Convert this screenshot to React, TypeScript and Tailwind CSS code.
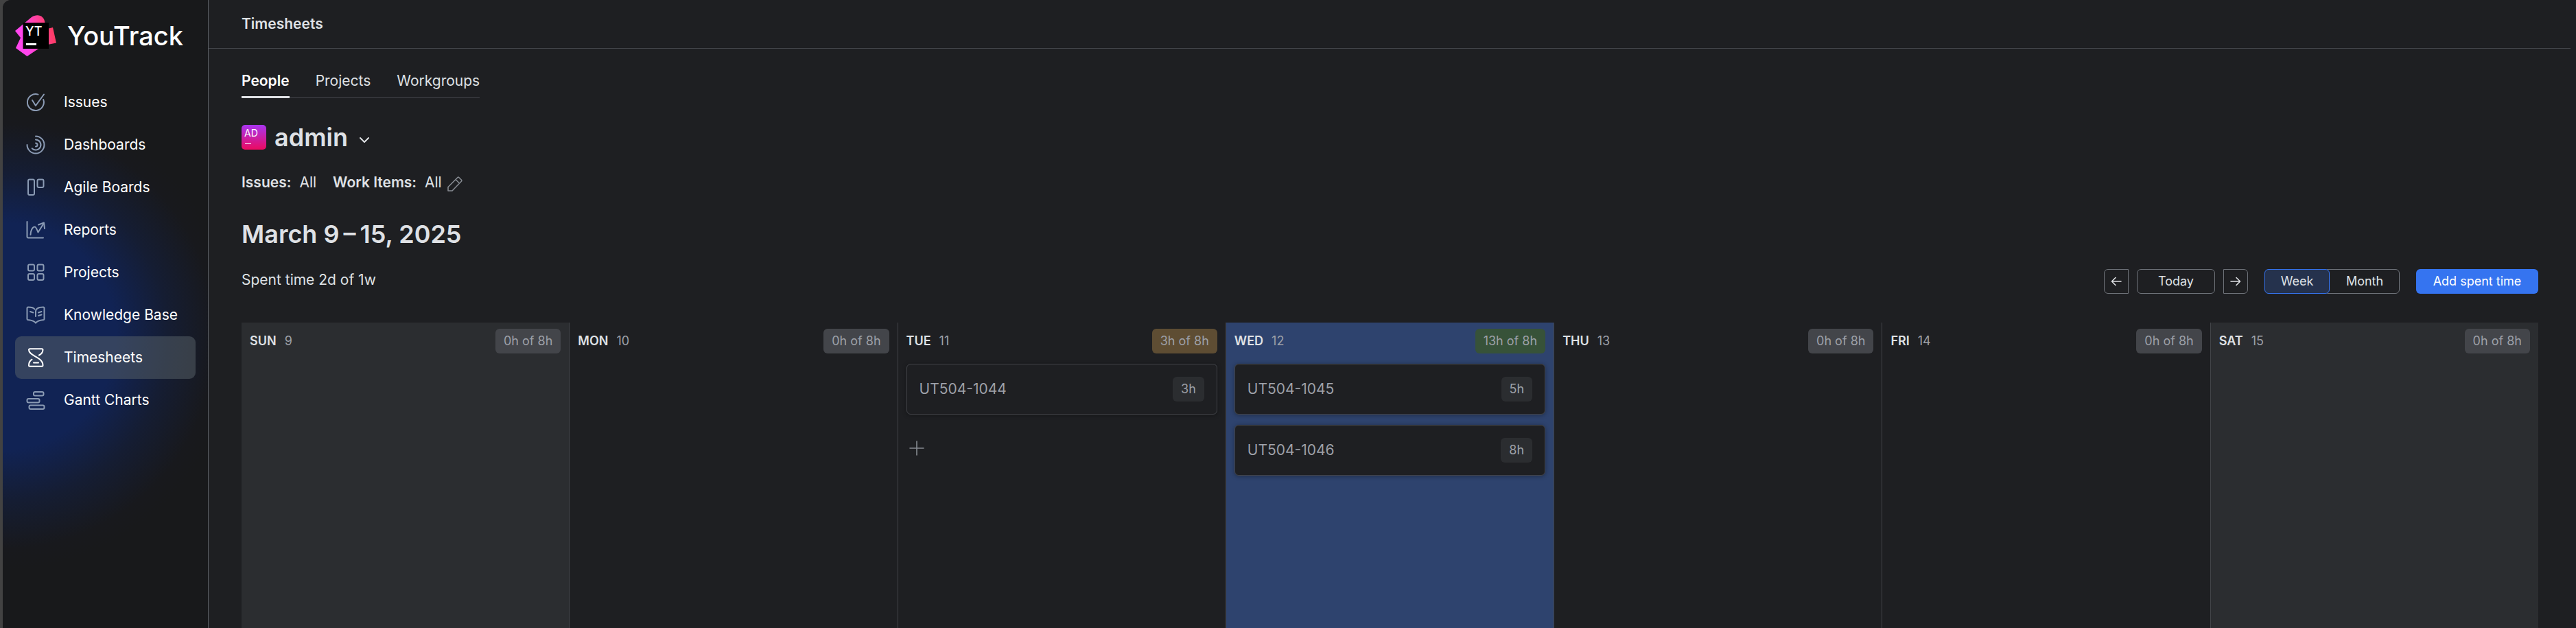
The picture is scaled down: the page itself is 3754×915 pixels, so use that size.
import { type ReactNode } from "react";

const svgProps = {
  width: 30,
  height: 30,
  viewBox: "0 0 30 30",
  fill: "none",
  stroke: "currentColor",
  strokeWidth: 2,
  strokeLinecap: "round" as const,
  strokeLinejoin: "round" as const,
  "aria-hidden": true,
};

const Icon = ({ children }: { children: ReactNode }) => <svg {...svgProps}>{children}</svg>;

const NAV: { label: string; icon: ReactNode; active?: boolean }[] = [
  {
    label: "Issues",
    icon: (
      <Icon>
        <path d="M18.5 3.6A12 12 0 1 0 26.2 11" />
        <path d="M10 12l5 8L27 3.5" />
      </Icon>
    ),
  },
  {
    label: "Dashboards",
    icon: (
      <Icon>
        <path d="M15 2.5a12.5 12.5 0 1 1-12.5 12.5" />
        <path d="M15 7.5a7.5 7.5 0 1 1-5.3 12.8" />
        <path d="M15 12.5a2.5 2.5 0 0 1 0 5" />
      </Icon>
    ),
  },
  {
    label: "Agile Boards",
    icon: (
      <Icon>
        <rect x="4" y="3.5" width="9" height="22.5" rx="2" />
        <rect x="17.5" y="3.5" width="9" height="11.5" rx="2" />
      </Icon>
    ),
  },
  {
    label: "Reports",
    icon: (
      <Icon>
        <path d="M2.5 3v22a1.5 1.5 0 0 0 1.5 1.5h22" />
        <path d="M7.5 22c0-6 3-11.5 6-11.5 2.5 0 3.5 5 5 8L27 5" />
        <path d="M19 7.5L27 4.5l1 8.5" />
      </Icon>
    ),
  },
  {
    label: "Projects",
    icon: (
      <Icon>
        <rect x="4" y="3.5" width="9" height="9" rx="2" />
        <rect x="17.5" y="3.5" width="9" height="9" rx="2" />
        <rect x="4" y="17" width="9" height="9" rx="2" />
        <rect x="17.5" y="17" width="9" height="9" rx="2" />
      </Icon>
    ),
  },
  {
    label: "Knowledge Base",
    icon: (
      <Icon>
        <path d="M15 26.5C13 23.5 8 22.5 3.5 22a1.2 1.2 0 0 1-1-1.2V5A1.5 1.5 0 0 1 4 3.5c4 0 8 .5 9.5 3" />
        <path d="M15 26.5c2-3 7-4 11.5-4.5a1.2 1.2 0 0 0 1-1.2V5A1.5 1.5 0 0 0 26 3.5C20 3.500 15 5 15 10v7" />
        <path d="M7 10l4.5 1.5M19 11.5l4.5-1.5M19 16l4.5-1.5" />
      </Icon>
    ),
  },
  {
    label: "Timesheets",
    active: true,
    icon: (
      <Icon>
        <path d="M20 11.5c4-2 5.5-4 5.5-8A1.5 1.5 0 0 0 24 2.3H6.5A1.5 1.5 0 0 0 5 3.800C5 13 25.5 13.5 25.5 26.2a1.5 1.5 0 0 1-1.5 1.5H6.5A1.5 1.5 0 0 1 5 26.2c0-4 1.5-6.5 4.5-8.5" />
        <path d="M12 22.5h7" />
      </Icon>
    ),
  },
  {
    label: "Gantt Charts",
    icon: (
      <Icon>
        <rect x="12" y="3" width="14.5" height="5.5" rx="2" />
        <rect x="2.5" y="13" width="18" height="5.5" rx="2" />
        <rect x="5.5" y="22.5" width="22" height="5.5" rx="2" />
      </Icon>
    ),
  },
];

type Day = {
  name: string;
  date: number;
  spent: string;
  column?: string;
  badge?: string;
  items?: { id: string; time: string }[];
  canAdd?: boolean;
};

const DAYS: Day[] = [
  { name: "SUN", date: 9, spent: "0h of 8h", column: "bg-[#2b2d30]" },
  { name: "MON", date: 10, spent: "0h of 8h" },
  {
    name: "TUE",
    date: 11,
    spent: "3h of 8h",
    badge: "bg-[#5e4d33]",
    items: [{ id: "UT504-1044", time: "3h" }],
    canAdd: true,
  },
  {
    name: "WED",
    date: 12,
    spent: "13h of 8h",
    column: "bg-[#2e436e]",
    badge: "bg-[#375239]",
    items: [
      { id: "UT504-1045", time: "5h" },
      { id: "UT504-1046", time: "8h" },
    ],
  },
  { name: "THU", date: 13, spent: "0h of 8h" },
  { name: "FRI", date: 14, spent: "0h of 8h" },
  { name: "SAT", date: 15, spent: "0h of 8h", column: "bg-[#2b2d30]" },
];

function Logo() {
  return (
    <a href="#home" className="flex items-center gap-4 pl-[18px] text-white">
      <svg width="60" height="60" viewBox="0 0 60 60" aria-hidden="true">
        <defs>
          <linearGradient id="mark" gradientUnits="userSpaceOnUse" x1="0" y1="40" x2="60" y2="24">
            <stop offset="0.25" stopColor="#ff45ed" />
            <stop offset="0.7" stopColor="#fe4090" />
            <stop offset="0.9" stopColor="#ff3c69" />
          </linearGradient>
        </defs>
        <path
          d="M0 23L24 3C32-2.500 43 0 43.500 12V40L34 49L17.500 60L1 48L8 33ZM45 20.500L55 18L60 40.500L45 43.500Z"
          fill="url(#mark)"
        />
        <rect x="11.500" y="11" width="37.500" height="38" fill="#000" />
        <text x="15" y="30" fontSize="18" fontFamily="Inter, sans-serif" fontWeight="500" fill="#fff">
          YT
        </text>
        <rect x="16" y="41" width="15" height="3" fill="#fff" />
      </svg>
      <span className="text-[38px] leading-[48px] font-medium">YouTrack</span>
    </a>
  );
}

function Sidebar() {
  return (
    <aside className="flex w-[300px] shrink-0 flex-col rounded-tl-xl border-r border-[#5a5d63] bg-[#18191b] bg-[radial-gradient(circle_at_0px_490px,#112354_0px,#112354_165px,#151d33_240px,#18191d_310px,#18191b_340px)] pt-[22px]">
      <Logo />
      <nav className="mt-[36px] flex flex-col px-[18px]">
        {NAV.map((item) => (
          <a
            key={item.label}
            href={"#" + item.label}
            className={
              "flex h-[62px] items-center gap-[26px] rounded-[9px] pl-[15px] text-[21px] leading-[30px] text-white " +
              (item.active ? "bg-[#5a6469]/50" : "")
            }
          >
            <span className={item.active ? "text-white" : "text-[#8b9bb4]"}>{item.icon}</span>
            {item.label}
          </a>
        ))}
      </nav>
    </aside>
  );
}

function Tabs() {
  return (
    <div role="tablist" className="flex w-fit gap-[38px] border-b border-[#43454a] text-[21px] leading-[30px]">
      <button role="tab" aria-selected="true" className="-mb-px border-b-3 border-[#dfe1e5] pb-[7px] font-semibold text-white">
        People
      </button>
      <button role="tab" aria-selected="false" className="pb-[9px]">
        Projects
      </button>
      <button role="tab" aria-selected="false" className="pb-[9px]">
        Workgroups
      </button>
    </div>
  );
}

function Controls() {
  return (
    <div className="flex text-[18px] leading-[24px]">
      <button aria-label="Previous" className="flex h-9 w-9 items-center justify-center rounded-l-md border border-[#6f737a]">
        <svg width="18" height="18" viewBox="0 0 18 18" fill="none" stroke="currentColor" strokeWidth="1.6" strokeLinecap="round" strokeLinejoin="round">
          <path d="M16 9H2.5M8 3.5L2.5 9L8 14.5" />
        </svg>
      </button>
      <button className="ml-3 h-9 w-[114px] rounded-md border border-[#6f737a]">Today</button>
      <button aria-label="Next" className="ml-3 flex h-9 w-9 items-center justify-center rounded-r-md border border-[#6f737a]">
        <svg width="18" height="18" viewBox="0 0 18 18" fill="none" stroke="currentColor" strokeWidth="1.6" strokeLinecap="round" strokeLinejoin="round">
          <path d="M2 9H15.5M10 3.5L15.5 9L10 14.5" />
        </svg>
      </button>
      <button className="z-10 ml-6 h-9 w-[95px] rounded-md border border-[#3574f0] bg-[#25324d]">Week</button>
      <button className="-ml-1 h-9 w-[106px] rounded-r-md border border-[#6f737a] pl-1">Month</button>
      <button className="ml-6 h-9 w-[178px] rounded-md bg-[#3574f0] text-white">Add spent time</button>
    </div>
  );
}

function DayColumn({ day, last }: { day: Day; last: boolean }) {
  return (
    <section
      className={
        "flex min-w-0 flex-1 flex-col px-3 pt-[9px] " + (day.column ?? "") + (last ? "" : " border-r border-[#43454a]")
      }
    >
      <header className="flex items-center text-[18px] leading-[36px]">
        <h2 className="font-semibold">{day.name}</h2>
        <span className="ml-3 text-[#9da0a8]">{day.date}</span>
        <span className={"ml-auto rounded-md px-3 text-[#9da0a8] " + (day.badge ?? "bg-[#43454a]")}>{day.spent}</span>
      </header>
      <div className="mt-[15px] flex flex-col gap-[15px]">
        {day.items?.map((item) => (
          <article
            key={item.id}
            className="flex h-[74px] items-center justify-between rounded-md border border-[#43454a] bg-[#1e1f22] px-[18px] text-[#9da0a8] shadow-[0_1px_6px_rgba(0,0,0,0.35)]"
          >
            <a href={"#" + item.id} className="text-[21px] leading-[30px]">
              {item.id}
            </a>
            <span className="rounded-md bg-[#2b2d30] px-3 text-[18px] leading-[36px]">{item.time}</span>
          </article>
        ))}
      </div>
      {day.canAdd && (
        <button aria-label="Add work item" className="mt-[38px] ml-1 w-fit text-[#868a91]">
          <svg width="22" height="22" viewBox="0 0 22 22" fill="none" stroke="currentColor" strokeWidth="1.6" strokeLinecap="round">
            <path d="M11 1V21M1 11H21" />
          </svg>
        </button>
      )}
    </section>
  );
}

export default function App() {
  return (
    <div className="flex min-h-screen bg-[#1e1f22] bg-[linear-gradient(to_right,#424242_24px,transparent_24px)] font-['Inter',sans-serif] text-[#dfe1e5]">
      <div className="w-1 shrink-0" />
      <Sidebar />
      <main className="flex min-w-0 flex-1 flex-col bg-[#1e1f22]">
        <header className="mr-2 border-b border-[#43454a] pt-5 pb-5 pl-12">
          <h1 className="text-[21px] leading-[30px] font-semibold">Timesheets</h1>
        </header>
        <div className="flex flex-1 flex-col pt-8 pr-[55px] pl-12">
          <Tabs />
          <button className="mt-9 flex w-fit items-center">
            <svg width="36" height="36" viewBox="0 0 36 36" aria-hidden="true">
              <defs>
                <linearGradient id="avatar" x1="0" y1="0" x2="0" y2="1">
                  <stop offset="0" stopColor="#a835f0" />
                  <stop offset="1" stopColor="#ec0a60" />
                </linearGradient>
              </defs>
              <rect width="36" height="36" rx="5" fill="url(#avatar)" />
              <text x="4" y="17" fontSize="14" fontFamily="Inter, sans-serif" fill="#fff">
                AD
              </text>
              <rect x="5" y="27" width="9" height="1" fill="#fff" />
            </svg>
            <span className="ml-3 text-[36px] leading-[42px] font-semibold">admin</span>
            <svg className="mt-2 ml-4" width="16" height="12" viewBox="0 0 16 12" fill="none" stroke="currentColor" strokeWidth="2" strokeLinecap="round" strokeLinejoin="round" aria-hidden="true">
              <path d="M2 3L8 9L14 3" />
            </svg>
          </button>
          <div className="mt-[30px] flex items-center text-[21px] leading-[30px]">
            <span className="font-semibold">Issues:</span>
            <span className="ml-3">All</span>
            <span className="ml-6 font-semibold">Work Items:</span>
            <span className="ml-3">All</span>
            <button aria-label="Edit filters" className="mt-1 ml-2 text-[#868a91]">
              <svg width="22" height="22" viewBox="0 0 22 22" fill="none" stroke="currentColor" strokeWidth="1.6" strokeLinejoin="round">
                <path d="M1 21V15.500L15 1.500a1.200 1.200 0 0 1 1.700 0L20.500 5.300a1.200 1.200 0 0 1 0 1.700L7 21ZM12 4.500L17.500 10" />
              </svg>
            </button>
          </div>
          <h2 className="mt-[39px] text-[36px] leading-[42px] font-semibold">March 9{"\u2009"}–{"\u2009"}15, 2025</h2>
          <div className="mt-[30px] flex items-start justify-between">
            <p className="text-[21px] leading-[32px]">Spent time 2d of 1w</p>
            <Controls />
          </div>
          <div className="mt-[42px] flex flex-1">
            {DAYS.map((day, i) => (
              <DayColumn key={day.name} day={day} last={i === DAYS.length - 1} />
            ))}
          </div>
        </div>
      </main>
    </div>
  );
}
